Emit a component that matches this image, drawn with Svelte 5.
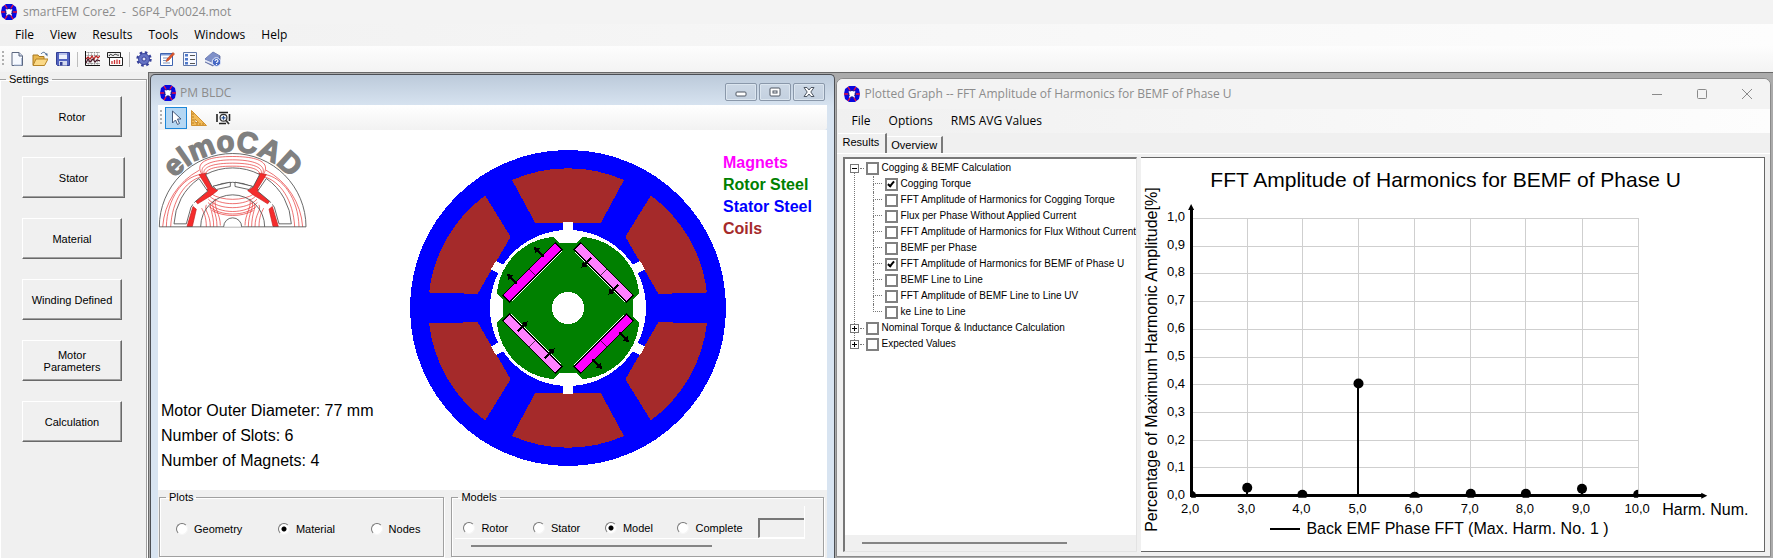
<script>
  const menus = ['File', 'View', 'Results', 'Tools', 'Windows', 'Help'];
  const graphMenus = ['File', 'Options', 'RMS AVG Values'];
  const settings = ['Rotor', 'Stator', 'Material', 'Winding Defined', 'Motor Parameters', 'Calculation'];
  const steels = [
    { name: 'Magnets', color: '#ff00ff' },
    { name: 'Rotor Steel', color: '#008000' },
    { name: 'Stator Steel', color: '#0000ff' },
    { name: 'Coils', color: '#a52a2a' }
  ];
  const facts = ['Motor Outer Diameter: 77 mm', 'Number of Slots: 6', 'Number of Magnets: 4'];
  const tree = [
    {
      label: 'Cogging & BEMF Calculation',
      open: true,
      children: [
        { label: 'Cogging Torque', checked: true },
        { label: 'FFT Amplitude of Harmonics for Cogging Torque', checked: false },
        { label: 'Flux per Phase Without Applied Current', checked: false },
        { label: 'FFT Amplitude of Harmonics for Flux Without Current', checked: false },
        { label: 'BEMF per Phase', checked: false },
        { label: 'FFT Amplitude of Harmonics for BEMF of Phase U', checked: true },
        { label: 'BEMF Line to Line', checked: false },
        { label: 'FFT Amplitude of BEMF Line to Line UV', checked: false },
        { label: 'ke Line to Line', checked: false }
      ]
    },
    { label: 'Nominal Torque & Inductance Calculation', open: false, children: [] },
    { label: 'Expected Values', open: false, children: [] }
  ];

  let plot = $state('Material');
  let model = $state('Model');

  const harmonics = [
    { n: 2, v: 0 },
    { n: 3, v: 0.03 },
    { n: 4, v: 0.003 },
    { n: 5, v: 0.405 },
    { n: 6, v: -0.004 },
    { n: 7, v: 0.006 },
    { n: 8, v: 0.006 },
    { n: 9, v: 0.026 },
    { n: 10, v: 0.002 }
  ];
  const x0 = 50, y0 = 337, dx = 55.7, dy = 277;
  const px = (n) => Math.round(x0 + (n - 2) * dx);
  const py = (v) => Math.round(y0 - v * dy);
  const fmt = (v) => v.toFixed(1).replace('.', ',');
  const levels = Array.from({ length: 11 }, (_, i) => i / 10);
</script>

{#snippet appIcon()}
  <svg class="app-icon" viewBox="0 0 16 16" aria-hidden="true">
    <path d="M5 0h6l4 3 1 5-1 5-4 3H5l-4-3-1-5 1-5z" fill="#0808e0" />
    <path d="M4 1 6.500 5M12 1 9.500 5M4 15l2.500-4M12 15l-2.500-4M0 8h5M11 8h5" stroke="#e8103c" stroke-width="1.400" />
    <circle cx="8" cy="8" r="4" fill="#1a1a9c" />
    <circle cx="8" cy="7.700" r="2.700" fill="#fff" />
    <path d="M5.300 11.300l1.700-2M10.700 11.300l-1.700-2M4.800 5.500l2 1.500M11.200 5.500l-2 1.500" stroke="#fff" stroke-width="1.300" />
  </svg>
{/snippet}

{#snippet radio(group, label, value, pick)}
  <label class="radio"><input type="radio" name={group} checked={value === label} onchange={() => pick(label)} />{label}</label>
{/snippet}

{#snippet node(item)}
  <label class="node"><input type="checkbox" checked={item.checked} />{item.label}</label>
{/snippet}

<div class="app">
  <header class="titlebar">
    {@render appIcon()}
    <span>smartFEM Core2&nbsp; -&nbsp; S6P4_Pv0024.mot</span>
  </header>
  <nav class="menu main-menu">
    {#each menus as m}<button>{m}</button>{/each}
  </nav>
  <div class="toolbar">
    <i class="grip"></i>
    <button aria-label="New">
      <svg viewBox="0 0 16 16"><path d="M3 1.500h7l3.500 3.500v9.500H3z" fill="#f6f9ff" stroke="#5b6780" /><path d="M10 1.500V5h3.500" fill="#cdd7ea" stroke="#5b6780" /><path d="M12.500 7v7H5" fill="none" stroke="#b4c2dc" /></svg>
    </button>
    <button aria-label="Open">
      <svg viewBox="0 0 16 16"><path d="M1 14V4h5l1 1.500h5V14z" fill="#e9b850" stroke="#a87820" /><path d="M1 14.500 4 8h12l-3.500 6.500z" fill="#fbd987" stroke="#b58427" /><path d="M9 3c2-2.500 4-2 5 0" fill="none" stroke="#4a6a94" /><path d="M12.500 2.500h3V5.500z" fill="#4a6a94" /></svg>
    </button>
    <button aria-label="Save">
      <svg viewBox="0 0 16 16"><path d="M1.500 1.500h13v13h-12l-1-1z" fill="#5263c0" stroke="#333f94" /><path d="M4 2h8v6H4z" fill="#eef1fb" /><path d="M4 2h8v2H4z" fill="#b9c2ea" /><path d="M4 10h8v4.500H4z" fill="#d3d9ee" /><path d="M5 11h2.500v3.500H5z" fill="#333f94" /></svg>
    </button>
    <i class="sep"></i>
    <button aria-label="Plot graph">
      <svg viewBox="0 0 16 16"><path d="M4.500 1v13M7.500 1v13M10.500 1v13M13.500 1v13M1 1.500h15M1 4.500h15M1 12.500h15" stroke="#888" stroke-width=".8" stroke-dasharray="1.500 .7" /><path d="M1.500 0v14.500H16" fill="none" stroke="#111" /><path d="M2 8l2-2 2 2 2-3 2 3 2-3 2 2 2-2" fill="none" stroke="#c02020" stroke-width="1.200" /><path d="M2 12l2-4 2 3 3-3 2 3 2-2 3 1" fill="none" stroke="#4d1b2b" stroke-width="1.200" /></svg>
    </button>
    <button aria-label="Results graph">
      <svg viewBox="0 0 16 16"><path d="M.500 1.500h13v5H.500z" fill="#eee" stroke="#222" /><path d="M2 5c2-4 3 1 5-1s3 1 5 0" fill="none" stroke="#222" /><path d="M2.500 6.500h13v8h-13z" fill="#fff" stroke="#222" /><path d="M5 13v-3M7.500 13V9M10 13V8.500M12.500 13V9" stroke="#c33" stroke-width="1.300" /></svg>
    </button>
    <i class="sep"></i>
    <button aria-label="Options">
      <svg viewBox="0 0 16 16"><circle cx="8" cy="8" r="6.300" fill="none" stroke="#38429a" stroke-width="2.800" stroke-dasharray="2.500 2.450" /><circle cx="8" cy="8" r="5.500" fill="#6573c4" stroke="#3d489f" /><circle cx="8" cy="8" r="2" fill="#dfe3f7" stroke="#38429a" /></svg>
    </button>
    <button aria-label="Edit">
      <svg viewBox="0 0 16 16"><path d="M1.500 2.500h12v12h-12z" fill="#fff" stroke="#3e64b0" /><path d="M2 3h11v1.500H2z" fill="#7c9ad6" /><path d="M4 7h5M4 9.500h3M4 12h7" stroke="#7d93bd" /><path d="M7 10.500 8 8l6-6.500 1.500 1.500L9.500 9.500z" fill="#e4572c" stroke="#a83a1a" stroke-width=".6" /></svg>
    </button>
    <button aria-label="List">
      <svg viewBox="0 0 16 16"><path d="M1.500 1.500h13v13h-13z" fill="#f7f9ff" stroke="#5f77a8" /><path d="M3 3h3v2.500H3zM3 7h3v2.500H3zM3 11h3v2.500H3z" fill="#4f79c9" /><path d="M8 4.500h5M8 8.500h5M8 12.500h5" stroke="#555" /></svg>
    </button>
    <button aria-label="Help">
      <svg viewBox="0 0 16 16"><path d="M0 8 8 1l7 4v4l-7 6-8-4z" fill="#6577b4" stroke="#46558f" stroke-width=".7" /><path d="M0 8.500 8 12l6-5v2l-6 5-8-3.500z" fill="#e4e8f5" /><path d="M0 8 8 1l7 4-7 6.500z" fill="#7f90c8" /><circle cx="11.500" cy="11" r="4.300" fill="#4668c4" stroke="#e9eefc" /><path d="M10 10c0-2 3-2 3 0 0 1-1.500 1-1.500 2M11.500 13v1" stroke="#fff" stroke-width="1.100" fill="none" /></svg>
    </button>
  </div>

  <div class="workspace">
    <aside class="side">
      <fieldset class="group settings">
        <legend>Settings</legend>
        <div class="stack">
          {#each settings as s}<button class:wide={s === 'Stator'}>{s}</button>{/each}
        </div>
      </fieldset>
    </aside>

    <main class="mdi">
      <section class="pm">
        <header>
          {@render appIcon()}
          <h2>PM BLDC</h2>
          <div class="aero">
            <button aria-label="Minimize"><svg viewBox="0 0 12 10"><rect x="1" y="5" width="10" height="4" rx="1" fill="#fff" stroke="#4e5763" /></svg></button>
            <button aria-label="Maximize"><svg viewBox="0 0 12 10"><rect x="1" y="1" width="10" height="8" rx="1" fill="#fff" stroke="#4e5763" /><rect x="4" y="4" width="4" height="2" fill="#fff" stroke="#4e5763" /></svg></button>
            <button aria-label="Close"><svg viewBox="0 0 12 10"><path d="M1 .5h3l2 2.500L8 .5h3L7.800 5 11 9.500H8L6 7 4 9.500H1L4.200 5z" fill="#fff" stroke="#4e5763" /></svg></button>
          </div>
        </header>
        <div class="tools">
          <i class="grip"></i>
          <button class="on" aria-label="Select"><svg viewBox="0 0 16 16"><path d="M4.500 1v12l3-3 2 4.500 2-1-2-4.500h3.500z" fill="#fff" stroke="#44597c" /></svg></button>
          <button aria-label="Measure"><svg viewBox="0 0 16 16"><path fill-rule="evenodd" d="M.5.5v15h15zM4 9v3.500h3.500z" fill="#f2bb58" stroke="#d19232" /><path d="M1 4h2M1 7h2M1 10h2M1 13h2M6 15v-2M9 15v-2M12 15v-2" stroke="#a96d18" stroke-width=".8" /></svg></button>
          <button aria-label="Zoom to extents"><svg viewBox="0 0 16 16"><path d="M4 2.500h9M4 13.500h7M2 4v8M14.500 4v7" stroke="#222" stroke-width="1.600" /><circle cx="8.500" cy="7.800" r="3.400" fill="#fff" stroke="#333" stroke-width="1.200" /><path d="M6.500 7.800h4M8.500 5.800v4" stroke="#234e92" stroke-width="1.200" /><path d="M11 10.500l3 3.500" stroke="#333" stroke-width="1.800" /></svg></button>
        </div>

        <div class="canvas">
          <div class="info">
            <svg class="logo" viewBox="55 182 450 290" role="img" aria-label="elmoCAD">
              <defs><path id="logo-arc" d="M53 469a226 226 0 0 1 452 0" /></defs>
              <g fill="none" stroke="#e62a2a" stroke-width="2">
                <path d="M69 469a210 210 0 0 1 110-170M80 469c2-85 50-150 103-157M93 469c4-80 44-138 92-150M489 469a210 210 0 0 0-110-170M478 469c-2-85-50-150-103-157M465 469c-4-80-44-138-92-150" />
                <path d="M187 312c-22-34 10-54 92-54s114 20 92 54M190 312c-14-26 20-44 89-44s103 18 89 44M194 312c-8-20 20-34 85-34s93 14 85 34M198 312c0-14 20-25 81-25s81 11 81 25" />
                <path d="M200 469c0-30-8-44-14-56M212 469c0-40-20-48-12-66M222 469c0-40-14-58-8-68M232 469c0-45-20-60-10-78M242 465c0-34-20-52-15-80" />
                <path d="M358 469c0-30 8-44 14-56M346 469c0-40 20-48 12-66M336 469c0-40 14-58 8-68M326 469c0-45 20-60 10-78M316 465c0-34 20-52 15-80" />
                <path d="M215 370c30 22 98 22 128 0M210 377c30 30 108 30 138 0M206 386c30 34 116 34 146 0M205 396c34 36 114 36 148 0M208 408c36 30 106 30 142 0M217 420c36 20 88 20 124 0" />
              </g>
              <g fill="#f52c2c" stroke="#c41c1c" stroke-width="2">
                <path d="M178 312l22-4 20 44 14 8-18 14-42 26-6-8 36-38z" />
                <path d="M380 312l-22-4-20 44-14 8 18 14 42 26 6-8-36-38z" />
                <path d="M160 408l10 8-12 52h-16zM398 408l-10 8 12 52h16z" />
              </g>
              <g fill="none" stroke="#4c4c4c" stroke-width="2.500">
                <path d="M59 469a220 220 0 0 1 440 0zM183 469a96 96 0 0 1 192 0" />
                <path d="M252 469a27 27 0 0 1 54 0" fill="#fff" />
                <path d="M103 460a176 176 0 0 1 75-136l26 38-38 32-12 16-14 50zM455 460a176 176 0 0 0-75-136l-26 38 38 32 12 16 14 50z" fill="#fff" />
                <path d="M198 312a176 176 0 0 1 162 0l-20 38a135 135 0 0 0-122 0z" fill="#fff" />
                <path d="M220 347l52-12v13l-42 9zM338 347l-52-12v13l42 9z" fill="#fff" />
                <path d="M158 396l14 10M400 396l-14 10" stroke="#fff" stroke-width="7" />
              </g>
              <text font-size="88" font-weight="700" fill="#808080" stroke="#808080" stroke-width="4" text-anchor="middle"><textPath href="#logo-arc" startOffset="50%">elmoCAD</textPath></text>
            </svg>
            <div class="facts">{#each facts as f}<p>{f}</p>{/each}</div>
          </div>
          <svg class="motor" viewBox="-474 -474 948 948" shape-rendering="crispEdges" role="img" aria-label="Motor cross section">
            <circle r="474" fill="#00f" />
            {#each [0, 60, 120, 180, 240, 300] as a}
              <g transform="rotate({a})">
                <path d="M-168-384A420 420 0 0 1 168-384L99-256H-99z" fill="#a52a2a" />
                <rect x="-15" y="-258" width="30" height="40" fill="#fff" />
              </g>
            {/each}
            <circle r="234" fill="#fff" />
            <path d="M-44-213-24-195H24L44-213A184 184 0 0 1 213-44L195-24V24L213 44A184 184 0 0 1 44 213L24 195H-24L-44 213A184 184 0 0 1-213 44L-195 24V-24L-213-44A184 184 0 0 1-44-213z" fill="#008000" />
            <circle r="48" fill="#fff" />
            {#each [-45, 45, 135, 225] as a, i}
              <g transform="rotate({a})" stroke="#000">
                <path d="M-104-134H108" stroke="#fff" stroke-width="3" />
                <rect x="-111" y="-165" width="222" height="28" stroke-width="3" fill={i % 2 ? '#ff80ff' : '#ff00ff'} />
                <path d="M0-165v28" stroke-width="2" />
                {#each [-57, 57] as x}
                  <g transform="translate({x} {i % 2 ? -156 : -160}) scale(1 {i % 2 ? -1 : 1})">
                    <path d="M0 0v-34" stroke-width="6" />
                    <path d="M0-42l-10 16H10z" fill="#000" stroke="none" />
                  </g>
                {/each}
              </g>
            {/each}
          </svg>
          <ul class="steels">
            {#each steels as s}<li style:color={s.color}>{s.name}</li>{/each}
          </ul>
        </div>

        <div class="bottom">
          <fieldset class="group plots">
            <legend>Plots</legend>
            <div class="radios">
              {#each ['Geometry', 'Material', 'Nodes'] as l}{@render radio('plots', l, plot, (v) => (plot = v))}{/each}
            </div>
          </fieldset>
          <fieldset class="group models">
            <legend>Models</legend>
            <div class="pane">
              <div class="radios">
                {#each ['Rotor', 'Stator', 'Model', 'Complete'] as l}{@render radio('models', l, model, (v) => (model = v))}{/each}
              </div>
              <input class="box" type="text" aria-label="Model part" />
            </div>
            <div class="hbar"></div>
          </fieldset>
        </div>
      </section>

      <section class="graph">
        <header>
          {@render appIcon()}
          <h2>Plotted Graph -- FFT Amplitude of Harmonics for BEMF of Phase U</h2>
          <div class="flat">
            <button aria-label="Minimize"><svg viewBox="0 0 12 12"><path d="M1 6.500h10" /></svg></button>
            <button aria-label="Maximize"><svg viewBox="0 0 12 12"><rect x="1.500" y="1.500" width="9" height="9" rx="1" /></svg></button>
            <button aria-label="Close"><svg viewBox="0 0 12 12"><path d="M1 1l10 10M11 1 1 11" /></svg></button>
          </div>
        </header>
        <nav class="menu">
          {#each graphMenus as m}<button>{m}</button>{/each}
        </nav>
        <div class="tabs">
          <button class="active">Results</button>
          <button>Overview</button>
        </div>
        <div class="body">
          <div class="tree">
            <ul class="roots">
              {#each tree as t}
                <li>
                  <div class="root">
                    <button class="exp" class:plus={!t.open} aria-label={t.open ? 'Collapse' : 'Expand'}></button>
                    {@render node(t)}
                  </div>
                  {#if t.children.length}
                    <ul class="kids">
                      {#each t.children as c}<li>{@render node(c)}</li>{/each}
                    </ul>
                  {/if}
                </li>
              {/each}
            </ul>
            <div class="hscroll"><div class="hbar"></div></div>
          </div>
          <div class="chart">
            <svg viewBox="0 0 622 391" preserveAspectRatio="xMinYMin meet" role="img" aria-label="Harmonic amplitudes">
              <text x="304" y="29" font-size="21" text-anchor="middle">FFT Amplitude of Harmonics for BEMF of Phase U</text>
              <text transform="translate(16 373) rotate(-90)" font-size="16">Percentage of Maximum Harmonic Amplitude[%]</text>
              <g stroke="#cfcfcf" shape-rendering="crispEdges">
                {#each levels.slice(1) as l}<path d="M{x0} {py(l)}H{px(10)}" />{/each}
                {#each harmonics.slice(1) as h}<path d="M{px(h.n)} {py(1)}V{y0}" />{/each}
              </g>
              <g font-size="13">
                {#each levels as l}<text x="44" y={py(l) + 3} text-anchor="end">{fmt(l)}</text>{/each}
                {#each harmonics as h}<text x={px(h.n) - 1} y="354" text-anchor="middle">{fmt(h.n)}</text>{/each}
              </g>
              <path d="M{x0} 51V{y0}H560" fill="none" stroke="#000" stroke-width="3" shape-rendering="crispEdges" />
              <path d="M47 52l3-6 3 6zM559 334l6 3-6 3z" />
              <clipPath id="plot-area"><rect x="50" y="40" width="446" height="299" /></clipPath>
              <g clip-path="url(#plot-area)">
                {#each harmonics as h}
                  <path d="M{px(h.n)} {y0}V{py(h.v)}" stroke="#000" stroke-width="2" shape-rendering="crispEdges" />
                  <circle cx={px(h.n)} cy={py(h.v)} r="5" />
                {/each}
              </g>
              <text x="520" y="356" font-size="16">Harm. Num.</text>
              <path d="M129 370h30" stroke="#000" stroke-width="2" shape-rendering="crispEdges" />
              <text x="165" y="375" font-size="16">Back EMF Phase FFT (Max. Harm. No. 1 )</text>
            </svg>
          </div>
        </div>
      </section>
    </main>
  </div>
</div>

<style>
  :global(body) { margin: 0; background: #f0f0f0; }
  .app { display: flex; flex-direction: column; min-height: 100vh; box-sizing: border-box; overflow: hidden; background: #f0f0f0; color: #000; font: 11px/14px 'Liberation Sans', Arial, sans-serif; }
  .app *, .app *::before, .app *::after { box-sizing: border-box; }
  button, input { font: inherit; color: inherit; margin: 0; }
  button { padding: 0; border: 0; background: none; }
  ul, h2, p { margin: 0; padding: 0; list-style: none; }
  svg { display: block; }

  .titlebar { display: flex; align-items: center; gap: 6px; height: 24px; padding: 0 1px; background: #f3f3f3; color: #8c8c8c; font: 12px/16px 'Open Sans', 'Noto Sans', sans-serif; }
  .app-icon { width: 16px; height: 16px; flex: none; }
  .menu { display: flex; align-items: center; gap: 18px; padding: 0 15px; height: 24px; font: 12px/16px 'Open Sans', 'Noto Sans', sans-serif; background: linear-gradient(90deg, #f0f0f0, #fdfdfd); }
  .main-menu { height: 22px; gap: 16px; }
  .toolbar { display: flex; align-items: center; height: 26px; padding-left: 2px; background: linear-gradient(#fdfdfd, #f3f3f3); }
  .toolbar button { width: 23px; height: 22px; display: grid; place-items: center; }
  .toolbar svg, .tools svg { width: 16px; height: 16px; }
  .grip { width: 3px; height: 16px; background: repeating-linear-gradient(#b0b0b0 0 2px, transparent 2px 4px); flex: none; }
  .toolbar .grip { width: 2px; margin-right: 1px; }
  .sep { width: 1px; height: 15px; background: #bdbdbd; margin: 0 2px 0 3px; }

  .workspace { flex: 1; display: grid; grid-template-columns: 148px 1fr; }
  .group { border: 1px solid #a0a0a0; box-shadow: inset 1px 1px #fff, 1px 1px #fff; margin: 0; padding: 0; min-width: 0; }
  .group legend { margin-left: 6px; padding: 0 3px; line-height: 14px; }
  .side { display: flex; padding-right: 1px; }
  .settings { flex: 1; border-left: 0; border-bottom: 0; }
  .stack { display: flex; flex-direction: column; align-items: flex-start; gap: 20px; padding: 10px 0 0 22px; }
  .stack button { width: 100px; height: 41px; padding: 0 20px; line-height: 12px; white-space: normal; border: 1px solid; border-color: #fff #696969 #696969 #fff; box-shadow: inset -1px -1px #a0a0a0; background: #f0f0f0; }
  .stack button:nth-child(4) { padding: 0; }
  .stack button.wide { width: 103px; }

  .mdi { display: grid; grid-template-columns: 685fr 936fr; gap: 1px; padding: 1px 2px 0 1px; background: #ababab; border: solid #696969; border-width: 1px 0 0 1px; min-width: 0; }
  h2 { font: 12px/16px 'Open Sans', 'Noto Sans', sans-serif; color: #8c8c8c; }
  .pm { display: flex; flex-direction: column; min-width: 0; padding: 0 7px; border: solid #4c4f54; border-width: 1px 1px 0; border-radius: 5px 5px 0 0; background: linear-gradient(#bccada, #d8e4f1 32px); }
  .pm header { display: flex; align-items: center; gap: 4px; height: 30px; padding: 6px 2px 0; }
  .aero { display: flex; gap: 2px; margin-left: auto; margin-bottom: 2px; }
  .aero button { width: 32px; height: 18px; display: grid; place-items: center; border: 1px solid #8a98aa; border-radius: 2px; background: linear-gradient(#ccd8e5, #c3d0df); box-shadow: inset 0 0 0 1px #dbe5ef; }
  .aero svg { width: 12px; height: 10px; }
  .tools { display: flex; align-items: center; height: 25px; padding-left: 2px; background: linear-gradient(#fff, #f2f2f2); border-radius: 0 0 3px 0; }
  .tools .grip { width: 2px; margin-right: 3px; }
  .tools button { width: 24px; height: 22px; display: grid; place-items: center; border: 1px solid transparent; }
  .tools button.on { width: 22px; border-color: #1c86d8; background: #b5d7f3; }

  .canvas { flex: 1; display: grid; grid-template-columns: 252px 313px 1fr; background: #fff; font-size: 16px; min-height: 350px; }
  .info { display: flex; flex-direction: column; justify-content: space-between; padding: 1px 0 17px; }
  .logo { width: 150px; height: 97px; overflow: visible; }
  .facts { padding-left: 3px; line-height: 25px; white-space: nowrap; }
  .motor { width: 316px; height: 316px; margin-top: 20px; }
  .steels { padding-top: 22px; font-weight: 700; line-height: 22px; white-space: nowrap; }

  .bottom { display: grid; grid-template-columns: 286fr 373fr; gap: 7px; height: 68px; padding: 0 3px 1px 1px; background: #f0f0f0; }
  .bottom legend { height: 14px; }
  .radios { display: flex; align-items: center; }
  .plots .radios { padding: 18px 23px 0 16px; justify-content: space-between; }
  .radio { display: flex; align-items: center; gap: 6px; line-height: 14px; }
  .radio input { appearance: none; width: 12px; height: 12px; border-radius: 50%; border: 1px solid; border-color: #777 #f5f5f5 #f5f5f5 #777; background: #fff; }
  .radio input:checked { background: radial-gradient(circle, #000 2px, #fff 3px); }
  .pane { display: flex; align-items: center; justify-content: space-between; height: 33px; margin: 2px 18px 0 3px; padding: 11px 0 0 8px; border: solid #fff; border-width: 0 1px 1px 0; }
  .pane .radios { flex: 1; justify-content: space-between; padding-right: 15px; }
  .box { width: 46px; height: 20px; border: 2px solid; border-color: #777 transparent #fff #777; border-right: 0; border-bottom-width: 1px; background: #f0f0f0; padding: 0 2px; }
  .hbar { height: 2px; background: #858585; }
  .models .hbar { width: 65%; margin: 6px 0 0 19px; }

  .graph { display: flex; flex-direction: column; min-width: 0; margin: 4px 0 1px; border: 1px solid #8a8a8a; border-radius: 7px 7px 0 0; background: #f0f0f0; overflow: hidden; }
  .graph header { display: flex; align-items: center; gap: 5px; height: 30px; padding: 0 0 0 7px; background: #f3f3f3; }
  .flat { display: flex; margin-left: auto; }
  .flat button { width: 45px; height: 30px; display: grid; place-items: center; }
  .flat svg { width: 12px; height: 12px; fill: none; stroke: #8a8a8a; }
  .tabs { display: flex; align-items: flex-end; height: 21px; padding-left: 1px; border-bottom: 1px solid #fff; }
  .tabs button { height: 17px; padding: 0 4px; border-right: 2px solid #7a7a7a; border-top: 1px solid #fff; }
  .tabs .active { height: 20px; padding: 0 6px 3px 5px; }
  .body { flex: 1; display: grid; grid-template-columns: 294px 1fr; gap: 4px; padding: 3px 5px 4px 6px; }
  .tree { display: flex; flex-direction: column; min-width: 0; overflow: hidden; border: solid; border-width: 2px 1px 1px 2px; border-color: #777 #e3e3e3 #e3e3e3 #777; background: #fff; }
  .roots { flex: 1; padding: 1px 0 0 5px; font-size: 10px; }
  .roots > li { position: relative; }
  .roots > li:not(:last-child)::before { content: ''; position: absolute; left: 4px; top: 13px; bottom: -4px; border-left: 1px dotted #777; }
  .root { display: flex; align-items: center; height: 16px; }
  .exp { width: 9px; height: 9px; border: 1px solid #777; background: linear-gradient(#000, #000) center / 5px 1px no-repeat #fff; margin-right: 7px; position: relative; }
  .exp.plus { background: linear-gradient(#000, #000) center / 5px 1px no-repeat, linear-gradient(#000, #000) center / 1px 5px no-repeat #fff; }
  .exp::after { content: ''; position: absolute; left: 9px; top: 3px; width: 4px; border-top: 1px dotted #777; }
  .node { display: flex; align-items: center; gap: 3px; height: 16px; white-space: nowrap; }
  .node input { appearance: none; flex: none; width: 13px; height: 13px; border: 2px solid #808080; background: #fff; position: relative; }
  .node input:checked::after { content: ''; position: absolute; left: 2px; top: 0; width: 4px; height: 7px; border: solid #000; border-width: 0 2px 2px 0; transform: rotate(40deg); }
  .kids { padding-left: 23px; }
  .kids li { display: flex; position: relative; padding-left: 12px; }
  .kids li::before { content: ''; position: absolute; left: 0; top: 0; width: 9px; height: 8px; border: dotted #777; border-width: 0 0 1px 1px; }
  .kids li:not(:last-child)::after { content: ''; position: absolute; left: 0; top: 8px; height: 8px; border-left: 1px dotted #777; }
  .hscroll { height: 16px; padding: 7px 0 0 17px; background: #f0f0f0; }
  .hscroll .hbar { width: 75%; }
  .chart { border: 1px solid #666; border-left: 0; background: #fff; min-width: 0; }
  .chart svg { width: 100%; height: auto; }
</style>
